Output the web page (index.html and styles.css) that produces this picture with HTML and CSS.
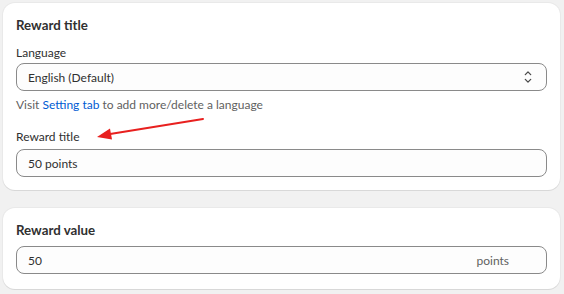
FILE: index.html
```html
<!DOCTYPE html>
<html>
<head>
<meta charset="utf-8">
<link rel="stylesheet" href="styles.css">
</head>
<body>
<div class="page">
  <section class="card card-title">
    <h2 class="card-heading">Reward title</h2>
    <div class="field">
      <label class="label">Language</label>
      <div class="select">
        <span class="select-value">English (Default)</span>
        <svg class="select-icon" width="10" height="14" viewBox="0 0 10 14" fill="none" stroke="#4a4a4a" stroke-width="1.3" stroke-linecap="round" stroke-linejoin="round">
          <path d="M2.3 4.6 L5 1.9 L7.7 4.6"/>
          <path d="M2.3 9.4 L5 12.1 L7.7 9.4"/>
        </svg>
      </div>
      <p class="help">Visit <a class="link" href="#">Setting tab</a> to add more/delete a language</p>
    </div>
    <div class="field field-title">
      <label class="label">Reward title</label>
      <div class="input"><span>50 points</span></div>
    </div>
  </section>
  <section class="card card-value">
    <h2 class="card-heading">Reward value</h2>
    <div class="input input-suffix"><span>50</span><span class="suffix">points</span></div>
  </section>
  <svg class="arrow" width="120" height="40" viewBox="0 0 120 40">
    <line x1="113" y1="8" x2="17" y2="23.5" stroke="#e8201f" stroke-width="2" stroke-linecap="round"/>
    <polygon points="7,26 20,17.5 22,28.5" fill="#e8201f"/>
  </svg>
</div>
</body>
</html>
```

FILE: styles.css
```css
* { box-sizing: border-box; }
html, body { margin: 0; padding: 0; }
body {
  background: #f1f1f1;
  font-family: "Lato", "Liberation Sans", sans-serif;
  font-size: 12px;
  color: #303030;
}
.page {
  position: relative;
  width: 564px;
  height: 294px;
  padding: 3px 4px 0 3px;
}
.card {
  background: #ffffff;
  border-radius: 12px;
  box-shadow: 0 1px 0 rgba(26,26,26,0.08), 0 0 0 1px rgba(26,26,26,0.035);
  padding: 12px 13px 13px 13px;
}
.card-value {
  margin-top: 18px;
  padding-bottom: 15px;
}
.card-heading {
  margin: 0;
  font-size: 13.3px;
  line-height: 20px;
  font-weight: 700;
}
.field { display: flex; flex-direction: column; }
.label {
  display: block;
  line-height: 16px;
  margin-top: 10px;
  margin-bottom: 2px;
}
.field-title .label { margin-top: 16px; margin-bottom: 4px; }
.select, .input {
  height: 28px;
  border: 1px solid #8a8a8a;
  border-radius: 8px;
  background: #fdfdfd;
  display: flex;
  align-items: center;
  padding: 0 11px 0 11px;
}
.select { justify-content: space-between; padding-right: 13px; }
.select-icon { display: block; }
.help {
  margin: 6px 0 0 0;
  line-height: 16px;
  color: #616161;
}
.link { color: #005bd3; text-decoration: none; }
.card-value .input { margin-top: 6px; }
.input-suffix { justify-content: space-between; padding-right: 37px; }
.suffix { color: #616161; }
.arrow {
  position: absolute;
  left: 90px;
  top: 111px;
}
```
